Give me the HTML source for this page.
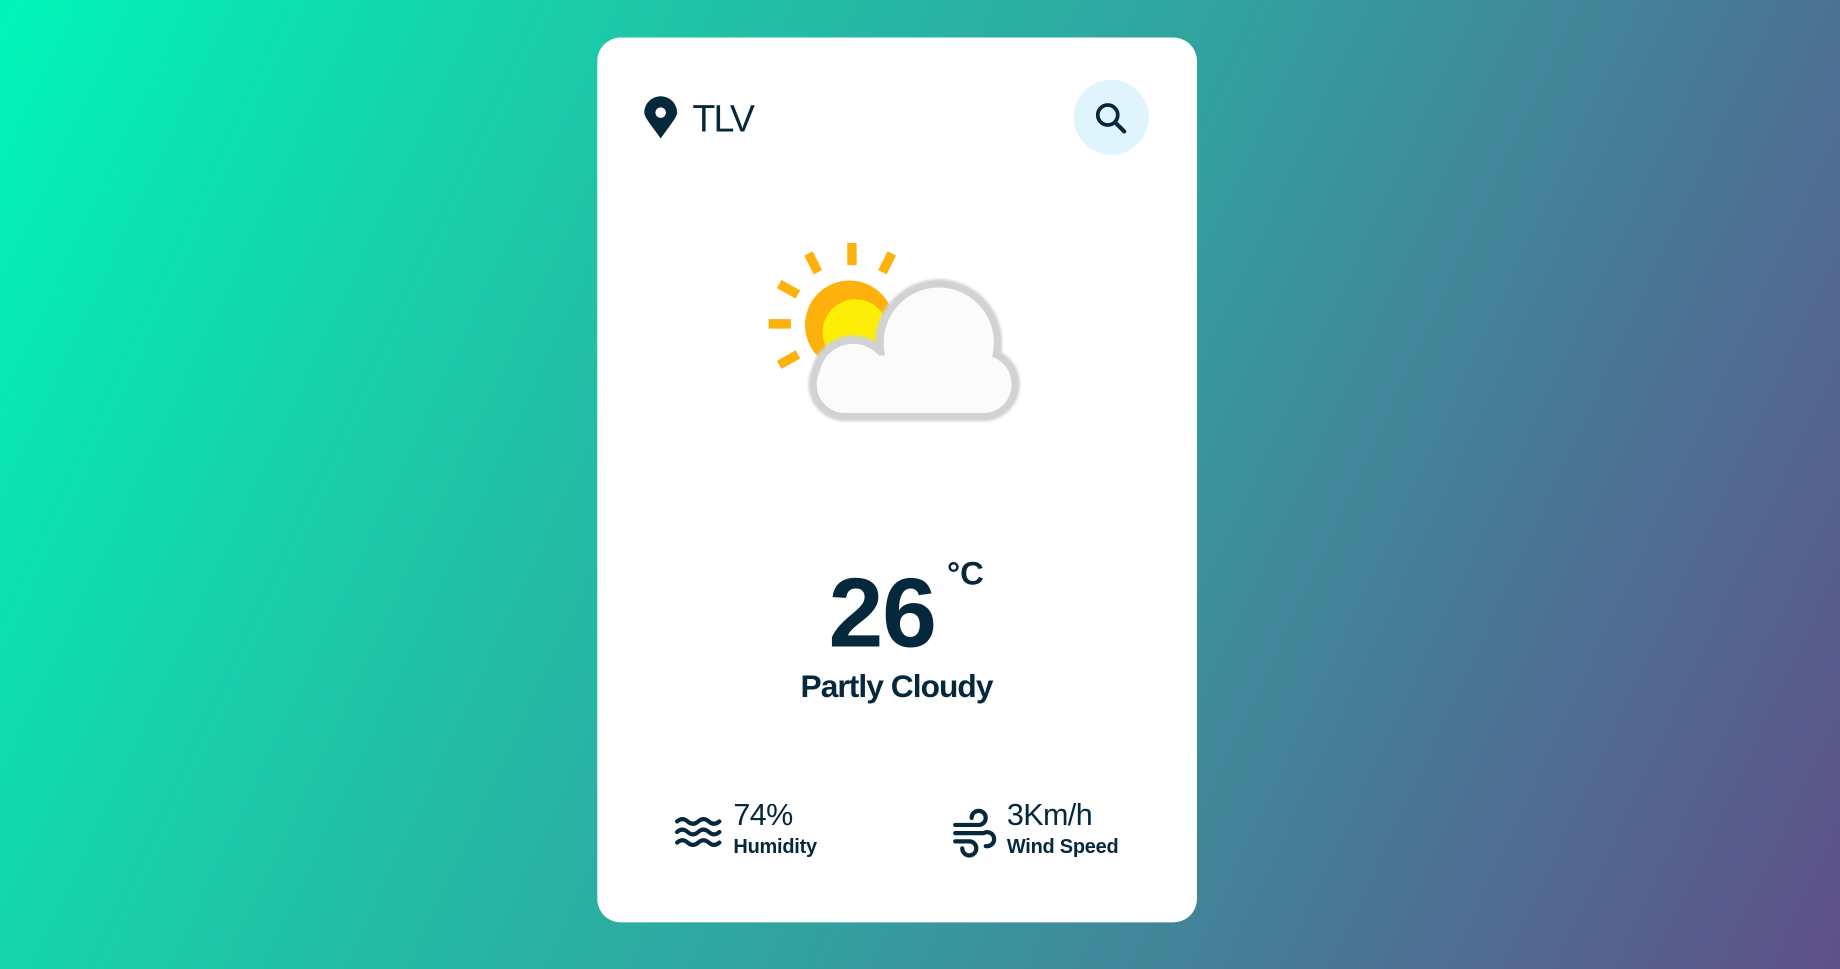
<!DOCTYPE html>
<html><head><meta charset="utf-8"><style>
html,body{margin:0;padding:0;width:1840px;height:969px;overflow:hidden}
body{background:linear-gradient(115deg,#00f5b8 0%,#1fc4a6 30%,#33a0a0 55%,#4a7694 78%,#5f5088 100%);font-family:"Liberation Sans",Arial,sans-serif;color:#06283d}
#w{position:absolute;left:0;top:0;width:1568px;height:826px;transform:scale(1.173469);transform-origin:0 0}
.card{position:absolute;left:509px;top:32px;width:511px;height:754px;background:#fff;border-radius:20px}
.a{position:absolute;white-space:nowrap}
</style></head><body><div id="w">
<div class="card"></div>
<svg class="a" style="left:0;top:0" width="1568" height="826" viewBox="0 0 1568 826">
 <defs><filter id="b"><feGaussianBlur stdDeviation="1.2"/></filter></defs>
 <path d="M563,118 C556,108 549,100 549,96 A14,14 0 0 1 577,96 C577,100 570,108 563,118 Z" fill="#06283d"/>
 <circle cx="563" cy="96" r="4.5" fill="#fff"/>
 <circle cx="947" cy="100" r="32" fill="#e0f4fd"/>
 <circle cx="944" cy="98" r="8.5" fill="none" stroke="#06283d" stroke-width="3.2"/>
 <line x1="950.5" y1="104.5" x2="958" y2="112" stroke="#06283d" stroke-width="3.5" stroke-linecap="round"/>
 <g stroke="#fdb10a" stroke-width="8">
  <line x1="726" y1="207" x2="726" y2="226"/>
  <line x1="760" y1="216" x2="752" y2="232"/>
  <line x1="689" y1="216" x2="697" y2="232"/>
  <line x1="664" y1="242" x2="680" y2="251"/>
  <line x1="655" y1="276" x2="674" y2="276"/>
  <line x1="664" y1="311" x2="680" y2="302"/>
 </g>
 <circle cx="724" cy="277" r="38" fill="#fdb10a"/>
 <circle cx="729" cy="283" r="28" fill="#fcee06"/>
 <g fill="#d0d2d3" filter="url(#b)">
  <rect x="689" y="296" width="180" height="63" rx="31"/>
  <circle cx="800" cy="292" r="54"/>
  <circle cx="727" cy="322" r="36"/>
 </g>
 <g fill="#fbfbfb">
  <rect x="696" y="303" width="166" height="49" rx="24"/>
  <circle cx="800" cy="292" r="47"/>
  <circle cx="727" cy="322" r="29"/>
 </g>
 <g fill="none" stroke="#06283d" stroke-width="3.5" stroke-linecap="round">
  <path d="M577,700 q4.5,-4 9,0 t9,0 t9,0 t9,0"/>
  <path d="M577,709 q4.5,-4 9,0 t9,0 t9,0 t9,0"/>
  <path d="M577,718 q4.5,-4 9,0 t9,0 t9,0 t9,0"/>
 </g>
 <g fill="none" stroke="#06283d" stroke-width="3.6" stroke-linecap="round">
  <path d="M814,703 H834 A6,6 0 1 0 828,697"/>
  <path d="M814,710 H838 A6,6 0 1 1 840,721"/>
  <path d="M814,717 H826 A6,6 0 1 1 820,723"/>
 </g>
</svg>
<div class="a" style="left:590px;top:83px;font-size:32px;line-height:36px;letter-spacing:-1.5px">TLV</div>
<div class="a" style="left:706px;top:474px;font-size:84px;font-weight:bold;line-height:96px;letter-spacing:-1px">26</div>
<div class="a" style="left:807px;top:473px;font-size:28px;font-weight:bold;line-height:32px">°C</div>
<div class="a" style="left:0;width:1528px;top:568px;font-size:27px;line-height:34px;text-align:center;letter-spacing:-0.8px;font-weight:bold;-webkit-text-stroke:0">Partly Cloudy</div>
<div class="a" style="left:625px;top:679px;font-size:26px;line-height:30px;letter-spacing:-0.5px">74%</div>
<div class="a" style="left:625px;top:711px;font-size:17px;line-height:22px;font-weight:bold;letter-spacing:-0.2px">Humidity</div>
<div class="a" style="left:858px;top:679px;font-size:26px;line-height:30px;letter-spacing:-0.5px">3Km/h</div>
<div class="a" style="left:858px;top:711px;font-size:17px;line-height:22px;font-weight:bold;letter-spacing:-0.2px">Wind Speed</div>
</div></body></html>
